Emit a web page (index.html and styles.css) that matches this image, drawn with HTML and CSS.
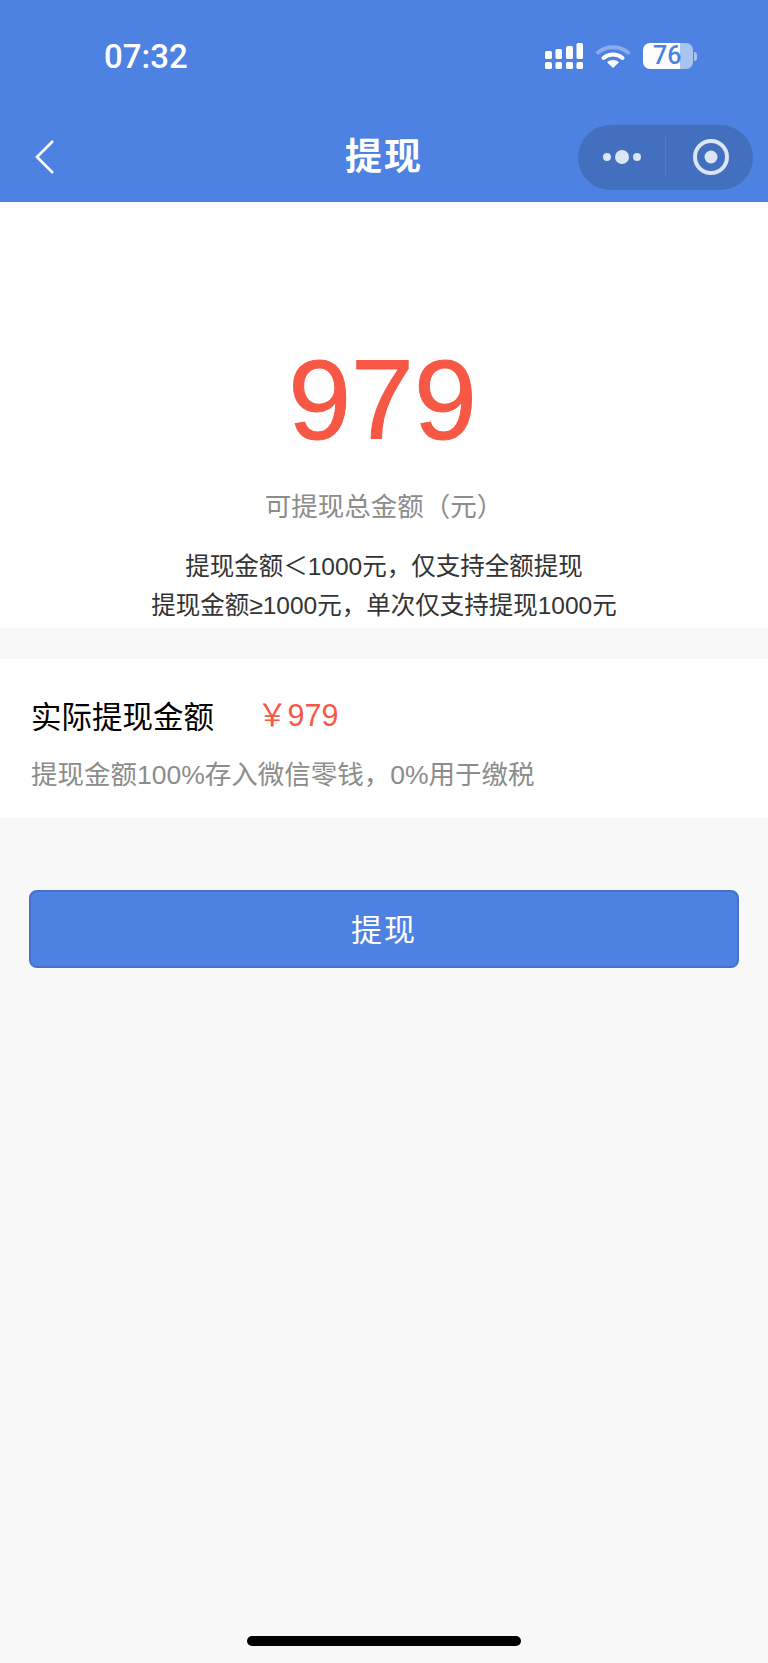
FILE: index.html
```html
<!DOCTYPE html>
<html lang="zh-CN">
<head>
    <meta charset="UTF-8">
    <meta name="viewport" content="width=device-width, initial-scale=1.0">
    <title>提现</title>
    <link rel="stylesheet" href="styles.css">
</head>
<body>
    <div class="page">
        <header class="header">
            <div class="status-bar">
                <span class="time">07:32</span>
                <div class="status-icons">
                    <svg class="signal" width="38" height="26" viewBox="0 0 38 26" fill="#fff">
                        <rect x="0" y="8" width="7" height="8" rx="1.5"/>
                        <rect x="10.5" y="6" width="6.5" height="10" rx="1.5"/>
                        <rect x="21" y="3" width="7" height="13" rx="1.5"/>
                        <rect x="31.5" y="0" width="6.5" height="16" rx="1.5"/>
                        <rect x="0" y="19" width="7" height="7" rx="1.5"/>
                        <rect x="10.5" y="19" width="6.5" height="7" rx="1.5"/>
                        <rect x="21" y="19" width="7" height="7" rx="1.5"/>
                        <rect x="31.5" y="19" width="6.5" height="7" rx="1.5"/>
                    </svg>
                    <svg class="wifi" width="34" height="24" viewBox="0 0 34 24" fill="none">
                        <path d="M2 8.5C10.500 1.500 23.500 1.500 32 8.500" stroke="#fff" stroke-opacity="0.35" stroke-width="4" stroke-linecap="round"/>
                        <path d="M7.500 14C13 9.300 21 9.300 26.500 14" stroke="#fff" stroke-width="4" stroke-linecap="round"/>
                        <path d="M17 24L11 18.200C14.500 15.300 19.500 15.300 23 18.200Z" fill="#fff"/>
                    </svg>
                    <div class="battery">
                        <div class="battery-body">76</div>
                        <div class="battery-nub"></div>
                    </div>
                </div>
            </div>
            <nav class="nav-bar">
                <svg class="back" width="20" height="36" viewBox="0 0 20 36" fill="none">
                    <path d="M18 2L2 18L18 34" stroke="#fff" stroke-width="2.600"/>
                </svg>
                <h1 class="nav-title">提现</h1>
                <div class="capsule">
                    <svg class="capsule-more" width="40" height="16" viewBox="0 0 40 16" fill="#dce5f5">
                        <circle cx="5" cy="8" r="4"/>
                        <circle cx="20" cy="8" r="7"/>
                        <circle cx="35" cy="8" r="4"/>
                    </svg>
                    <div class="capsule-line"></div>
                    <svg class="capsule-close" width="36" height="36" viewBox="0 0 36 36" fill="none">
                        <circle cx="18" cy="18" r="16" stroke="#dce5f5" stroke-width="4"/>
                        <circle cx="18" cy="18" r="6.500" fill="#dce5f5"/>
                    </svg>
                </div>
            </nav>
        </header>

        <section class="hero">
            <div class="amount">979</div>
            <div class="amount-label">可提现总金额（元）</div>
            <div class="rules">
                <p>提现金额＜1000元，仅支持全额提现</p>
                <p>提现金额≥1000元，单次仅支持提现1000元</p>
            </div>
        </section>

        <section class="actual">
            <div class="actual-row">
                <span class="actual-title">实际提现金额</span>
                <span class="actual-value">￥979</span>
            </div>
            <div class="actual-desc">提现金额100%存入微信零钱，0%用于缴税</div>
        </section>

        <button class="submit" type="button">提现</button>

        <div class="home-bar"></div>
    </div>
</body>
</html>
```

FILE: styles.css
```css
* {
    box-sizing: border-box;
}
body {
    margin: 0;
    background-color: #f8f8f8;
    font-family: "Liberation Sans", "Noto Sans CJK SC", sans-serif;
}
.page {
    display: flex;
    flex-direction: column;
    min-height: 100vh;
}
.header {
    background-color: #4e82e2;
    color: #fff;
}
.status-bar {
    display: flex;
    align-items: center;
    justify-content: space-between;
    height: 112px;
    padding: 0 71px 0 104px;
}
.time {
    font-family: Roboto, sans-serif;
    font-size: 33px;
    font-weight: 500;
}
.status-icons {
    display: flex;
    align-items: center;
    gap: 13px;
}
.battery {
    display: flex;
    align-items: center;
    gap: 1px;
}
.battery-body {
    width: 50px;
    height: 26px;
    padding-left: 10px;
    border-radius: 7px;
    background: linear-gradient(to right, #fff 74%, #a9c4f1 74%);
    color: #4e82e2;
    font-family: Roboto, sans-serif;
    font-size: 25px;
    font-weight: 500;
    line-height: 26px;
}
.battery-nub {
    width: 3px;
    height: 9px;
    border-radius: 0 3px 3px 0;
    background-color: #a9c4f1;
}
.nav-bar {
    display: grid;
    grid-template-columns: 1fr auto 1fr;
    align-items: center;
    height: 90px;
}
.back {
    margin-left: 35px;
}
.nav-title {
    margin: 0;
    padding-top: 2px;
    font-size: 37px;
    font-weight: bold;
    line-height: 50px;
    letter-spacing: 2px;
}
.capsule {
    display: flex;
    align-items: center;
    justify-self: end;
    width: 175px;
    height: 65px;
    margin-right: 15px;
    padding-left: 24px;
    border-radius: 33px;
    background-color: #4270be;
}
.capsule-line {
    width: 1px;
    height: 40px;
    margin: 0 27px 0 23px;
    background-color: #4f7cc8;
}
.hero {
    display: flex;
    flex-direction: column;
    align-items: center;
    height: 426px;
    padding-top: 138px;
    background-color: #fff;
}
.amount {
    margin-right: 3px;
    color: #f75845;
    font-size: 113px;
    line-height: 120px;
    -webkit-text-stroke: 1px #f75845;
}
.amount-label {
    margin-top: 29px;
    color: #8c8c8c;
    font-size: 26.500px;
    line-height: 36px;
}
.rules {
    margin-top: 23px;
    color: #333;
    font-size: 24.500px;
    line-height: 38.500px;
    text-align: center;
}
.rules p {
    margin: 0;
}
.actual {
    margin-top: 31px;
    padding: 36px 31px 25px;
    background-color: #fff;
}
.actual-row {
    display: flex;
    align-items: center;
    height: 40px;
}
.actual-title {
    color: #000;
    font-size: 30.500px;
}
.actual-value {
    margin-left: 43px;
    color: #f75845;
    font-size: 30.500px;
    line-height: 34px;
}
.actual-desc {
    margin-top: 22px;
    color: #8c8c8c;
    font-size: 26.500px;
    line-height: 36px;
}
.submit {
    height: 78px;
    margin: 72px 29px 0;
    padding: 0 0 4px;
    border: 2px solid #4672cc;
    border-radius: 8px;
    background-color: #4e82e2;
    color: #fff;
    font-family: inherit;
    font-size: 31px;
    letter-spacing: 2px;
}
.home-bar {
    width: 274px;
    height: 10px;
    margin: auto auto 17px;
    border-radius: 5px;
    background-color: #000;
}
```
